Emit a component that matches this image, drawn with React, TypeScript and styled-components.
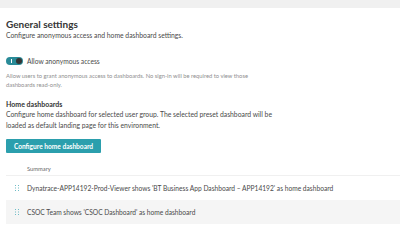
import React from "react";
import styled, { createGlobalStyle } from "styled-components";

const Global = createGlobalStyle`
  html, body { margin: 0; padding: 0; background: #fff; }
  body { font-family: Lato, "Open Sans", sans-serif; color: #4a4a4a; }
`;

const Page = styled.div`
  width: 400px;
  height: 246px;
  overflow: hidden;
  display: flex;
  flex-direction: column;
`;

const TopBar = styled.div`
  height: 8px;
  flex-shrink: 0;
  background: #f0f0f0;
`;

const Content = styled.div`
  padding: 10px 0 0 6px;
  display: flex;
  flex-direction: column;
`;

const Title = styled.h1`
  margin: 0;
  font-size: 10px;
  font-weight: 700;
  color: #353535;
  line-height: 12px;
`;

const Sub = styled.p`
  margin: 0;
  font-size: 6.8px;
  line-height: 10px;
  color: #4a4a4a;
`;

const ToggleRow = styled.div`
  display: flex;
  align-items: center;
  gap: 4px;
  height: 9px;
  margin-top: 16px;
`;

const Toggle = styled.div`
  width: 17px;
  height: 8px;
  border-radius: 4px;
  background: #2a8b98;
  position: relative;
  flex-shrink: 0;
  &::before {
    content: "";
    position: absolute;
    left: 5px;
    top: 2px;
    width: 1px;
    height: 4px;
    background: #fff;
  }
  &::after {
    content: "";
    position: absolute;
    right: 1px;
    top: 1px;
    width: 6px;
    height: 6px;
    border-radius: 50%;
    background: #353535;
  }
`;

const Label = styled.span`
  font-size: 6.7px;
  color: #4a4a4a;
`;

const Help = styled.p`
  margin: 6px 0 0;
  font-size: 5.8px;
  line-height: 9px;
  color: #8f8f8f;
  max-width: 256px;
`;

const SectionTitle = styled.h2`
  margin: 10px 0 0;
  font-size: 7px;
  font-weight: 700;
  line-height: 10px;
  color: #353535;
`;

const Desc = styled.p`
  margin: 0;
  font-size: 6.8px;
  line-height: 11px;
  color: #4a4a4a;
  max-width: 280px;
`;

const Button = styled.button`
  align-self: flex-start;
  margin-top: 8px;
  height: 14px;
  width: 95px;
  padding: 0;
  border: none;
  border-radius: 1px;
  background: #2b9fad;
  color: #fff;
  font-family: Lato, sans-serif;
  font-size: 6.6px;
  font-weight: 700;
`;

const TableHead = styled.div`
  margin-top: 10px;
  padding-left: 21px;
  font-size: 5.8px;
  color: #666;
  height: 12px;
  line-height: 12px;
  border-bottom: 1px solid #f0f0f0;
`;

const Rows = styled.div`
  display: flex;
  flex-direction: column;
`;

const Row = styled.div<{ $alt?: boolean }>`
  display: flex;
  align-items: center;
  height: 24px;
  background: ${(p) => (p.$alt ? "#f5f5f5" : "#fff")};
  font-size: 6.65px;
  color: #4a4a4a;
  white-space: nowrap;
`;

const Handle = styled.div`
  width: 21px;
  display: flex;
  justify-content: center;
`;

function Grip() {
  return (
    <svg width="4" height="6" viewBox="0 0 4 6">
      {[0, 2.5, 5].map((y) =>
        [0, 3].map((x) => <rect key={`${x}-${y}`} x={x} y={y} width="1" height="1" fill="#6fbcc6" />)
      )}
    </svg>
  );
}

export default function App() {
  return (
    <Page>
      <Global />
      <TopBar />
      <Content>
        <Title>General settings</Title>
        <Sub>Configure anonymous access and home dashboard settings.</Sub>
        <ToggleRow>
          <Toggle />
          <Label>Allow anonymous access</Label>
        </ToggleRow>
        <Help>
          Allow users to grant anonymous access to dashboards. No sign-in will be required to view those
          dashboards read-only.
        </Help>
        <SectionTitle>Home dashboards</SectionTitle>
        <Desc>
          Configure home dashboard for selected user group. The selected preset dashboard will be loaded as
          default landing page for this environment.
        </Desc>
        <Button>Configure home dashboard</Button>
        <TableHead>Summary</TableHead>
        <Rows>
          <Row>
            <Handle>
              <Grip />
            </Handle>
            Dynatrace-APP14192-Prod-Viewer shows 'BT Business App Dashboard – APP14192' as home dashboard
          </Row>
          <Row $alt>
            <Handle>
              <Grip />
            </Handle>
            CSOC Team shows 'CSOC Dashboard' as home dashboard
          </Row>
        </Rows>
      </Content>
    </Page>
  );
}
